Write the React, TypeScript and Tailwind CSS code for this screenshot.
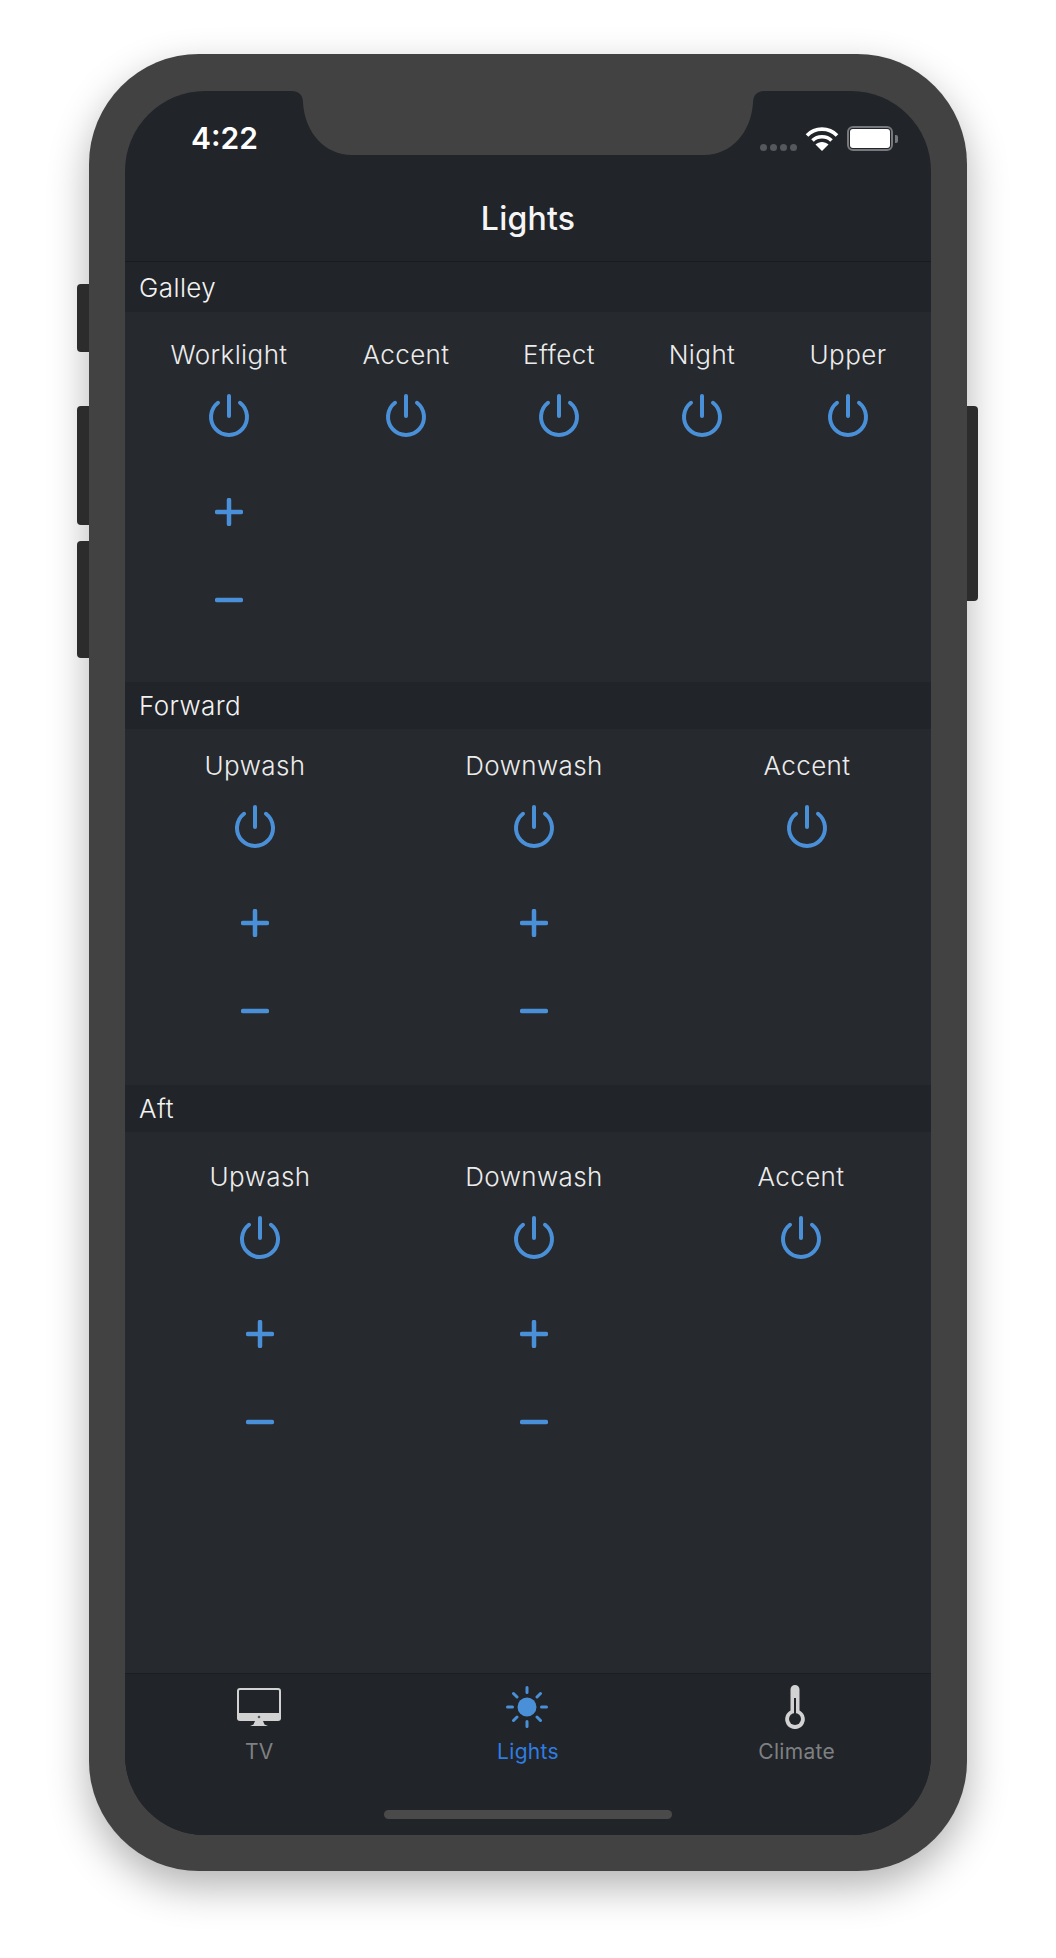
const font = { fontFamily: 'Inter, "Liberation Sans", sans-serif' };

type Col = { label: string; width: string; dim?: boolean };

const PowerIcon = () => (
  <svg width="44" height="44" viewBox="0 0 44 44" fill="none" stroke="#4a90d9" strokeWidth="4" strokeLinecap="round">
    <path d="M22 2V22" />
    <path d="M11 8.75A18 18 0 1 0 33 8.75" />
  </svg>
);

const PlusIcon = () => (
  <svg width="28" height="28" viewBox="0 0 28 28" fill="none" stroke="#4a90d9" strokeWidth="4.5" strokeLinecap="round">
    <path d="M14 2V26M2 14H26" />
  </svg>
);

const MinusIcon = () => (
  <svg width="28" height="28" viewBox="0 0 28 28" fill="none" stroke="#4a90d9" strokeWidth="4.5" strokeLinecap="round">
    <path d="M2 14H26" />
  </svg>
);

const Section = ({
  title,
  cols,
  className,
  bodyClass,
  headerClass,
}: {
  title: string;
  cols: Col[];
  className?: string;
  bodyClass: string;
  headerClass: string;
}) => (
  <div className={className}>
    <div
      className={`${headerClass} flex items-center bg-[#212428] pl-[14px] text-[26px] font-light tracking-[0.4px] text-[#f2f2f2]`}
    >
      {title}
    </div>
    <div className={`${bodyClass} flex bg-[#26292e]`}>
      {cols.map((c) => (
        <div key={c.label} className={`${c.width} flex flex-col items-center`}>
          <div className="h-[30px] text-[26px] leading-[30px] font-light tracking-[0.4px] text-[#ececec]">{c.label}</div>
          <div className="mt-[24px]">
            <PowerIcon />
          </div>
          {!c.dim && (
            <>
              <div className="mt-[60px]">
                <PlusIcon />
              </div>
              <div className="mt-[60px]">
                <MinusIcon />
              </div>
            </>
          )}
        </div>
      ))}
    </div>
  </div>
);

const Notch = () => (
  <svg className="absolute left-0 top-0" width="806" height="70" viewBox="0 0 806 70" fill="#424242">
    <path d="M166 0Q178 0 178 12C180 42 200 64 227 64L579 64C606 64 626 42 628 12Q628 0 640 0Z" />
  </svg>
);

const Wifi = () => (
  <svg width="34" height="25" viewBox="0 0 34 25" fill="none" stroke="#fff" strokeWidth="3.6">
    <path d="M2 9.5C10 1 24 1 32 9.5" />
    <path d="M7.5 14.5C12.5 9.5 21.5 9.5 26.5 14.5" />
    <path d="M17 25L10.5 18.5C14 15 20 15 23.5 18.5Z" fill="#fff" stroke="none" />
  </svg>
);

const TvIcon = () => (
  <svg width="44" height="38" viewBox="0 0 44 38" fill="none">
    <rect x="1" y="1" width="42" height="30" rx="2" stroke="#d2d2d2" strokeWidth="2" />
    <path d="M0 25H44V30A3 3 0 0 1 41 33H3A3 3 0 0 1 0 30Z" fill="#d2d2d2" />
    <circle cx="22" cy="29" r="1.3" fill="#55585c" />
    <path d="M18 33H26L27.5 36.5L31 38H13L16.5 36.5Z" fill="#d2d2d2" />
  </svg>
);

const SunIcon = () => (
  <svg className="mr-[2px]" width="44" height="44" viewBox="0 0 44 44" fill="none" stroke="#4a90d9" strokeWidth="3" strokeLinecap="round">
    <circle cx="22" cy="22" r="9.5" fill="#4a90d9" stroke="none" />
    <path d="M22 2.5V7.5M22 36.5V41.5M2.5 22H7.5M36.5 22H41.5M8.5 8.5L12 12M32 32L35.5 35.5M8.5 35.5L12 32M32 12L35.5 8.5" />
  </svg>
);

const ThermoIcon = () => (
  <svg className="mr-[3px]" width="20" height="44" viewBox="0 0 20 44" fill="none">
    <path d="M5.5 4.5A4.5 4.5 0 0 1 14.5 4.5V25.5A9.8 9.8 0 1 1 5.5 25.5Z" fill="#d2d2d2" />
    <circle cx="10" cy="34" r="6" fill="#212428" />
    <rect x="9" y="13" width="2" height="17" fill="#212428" />
  </svg>
);

const Tab = ({ label, icon, active }: { label: string; icon: React.ReactNode; active?: boolean }) => (
  <div className="flex flex-col items-center">
    <div className="flex h-[44px] items-center">{icon}</div>
    <div
      className={`mt-[11px] text-[21px] leading-[24px] font-normal tracking-[0.3px] ${active ? 'text-[#2f7de1]' : 'text-[#7f8082]'}`}
    >
      {label}
    </div>
  </div>
);

export default function App() {
  return (
    <div className="h-[1958px] w-[1056px] bg-white pt-[54px] pl-[89px]" style={font}>
      <div className="relative h-[1817px] w-[878px] rounded-[110px] bg-[#424242] pt-[37px] pr-[36px] pb-[36px] pl-[36px] shadow-[0_16px_40px_rgba(0,0,0,0.3)]">
        <div className="absolute top-[230px] left-[-12px] h-[68px] w-[12px] rounded-l-[4px] bg-[#2c2c2c]" />
        <div className="absolute top-[352px] left-[-12px] h-[119px] w-[12px] rounded-l-[4px] bg-[#2c2c2c]" />
        <div className="absolute top-[487px] left-[-12px] h-[117px] w-[12px] rounded-l-[4px] bg-[#2c2c2c]" />
        <div className="absolute top-[352px] right-[-11px] h-[195px] w-[11px] rounded-r-[4px] bg-[#2c2c2c]" />

        <div className="relative flex h-full flex-col overflow-hidden rounded-[80px] bg-[#212428]">
          <Notch />

          {/* nav bar */}
          <div className="h-[171px] shrink-0 border-b border-[#191c1f]">
            <div className="flex h-[60px] items-end justify-between pr-[33px] pl-[66px]">
              <div className="mb-[-5px] text-[30px] leading-[35px] font-semibold text-white">4:22</div>
              <div className="flex items-end">
                <div className="flex gap-[3px]">
                  <span className="h-[7px] w-[7px] rounded-full bg-[#55585c]" />
                  <span className="h-[7px] w-[7px] rounded-full bg-[#55585c]" />
                  <span className="h-[7px] w-[7px] rounded-full bg-[#55585c]" />
                  <span className="h-[7px] w-[7px] rounded-full bg-[#55585c]" />
                </div>
                <div className="ml-[8px]">
                  <Wifi />
                </div>
                <div className="ml-[8px] flex items-center">
                  <div className="h-[25px] w-[46px] rounded-[6px] border-2 border-[#77797c] p-[1px]">
                    <div className="h-full w-full rounded-[3px] bg-white" />
                  </div>
                  <div className="ml-[2px] h-[8px] w-[3px] rounded-r-[2px] bg-[#77797c]" />
                </div>
              </div>
            </div>
            <div className="mt-[48px] text-center text-[32px] leading-[40px] font-medium tracking-[0.2px] text-[#f5f5f5]">
              Lights
            </div>
          </div>

          <Section
            title="Galley"
            headerClass="h-[50px]"
            bodyClass="h-[370px] pt-[28px]"
            cols={[
              { label: 'Worklight', width: 'w-[208px]' },
              { label: 'Accent', width: 'w-[146px]', dim: true },
              { label: 'Effect', width: 'w-[160px]', dim: true },
              { label: 'Night', width: 'w-[126px]', dim: true },
              { label: 'Upper', width: 'w-[166px]', dim: true },
            ]}
          />
          <Section
            title="Forward"
            headerClass="h-[47px]"
            bodyClass="h-[356px] pt-[22px]"
            cols={[
              { label: 'Upwash', width: 'w-[260px]' },
              { label: 'Downwash', width: 'w-[298px]' },
              { label: 'Accent', width: 'w-[248px]', dim: true },
            ]}
          />
          <Section
            title="Aft"
            className="flex min-h-0 flex-1 flex-col"
            headerClass="h-[47px] shrink-0"
            bodyClass="flex-1 pt-[30px]"
            cols={[
              { label: 'Upwash', width: 'w-[270px]' },
              { label: 'Downwash', width: 'w-[278px]' },
              { label: 'Accent', width: 'w-[256px]', dim: true },
            ]}
          />

          {/* tab bar */}
          <div className="flex h-[162px] shrink-0 flex-col border-t border-[#1c1f22] bg-[#212428] pt-[11px]">
            <div className="grid grid-cols-3">
              <Tab label="TV" icon={<TvIcon />} />
              <Tab label="Lights" icon={<SunIcon />} active />
              <Tab label="Climate" icon={<ThermoIcon />} />
            </div>
            <div className="mx-auto mt-[46px] h-[9px] w-[288px] rounded-full bg-[#4a4a4a]" />
          </div>
        </div>
      </div>
    </div>
  );
}
